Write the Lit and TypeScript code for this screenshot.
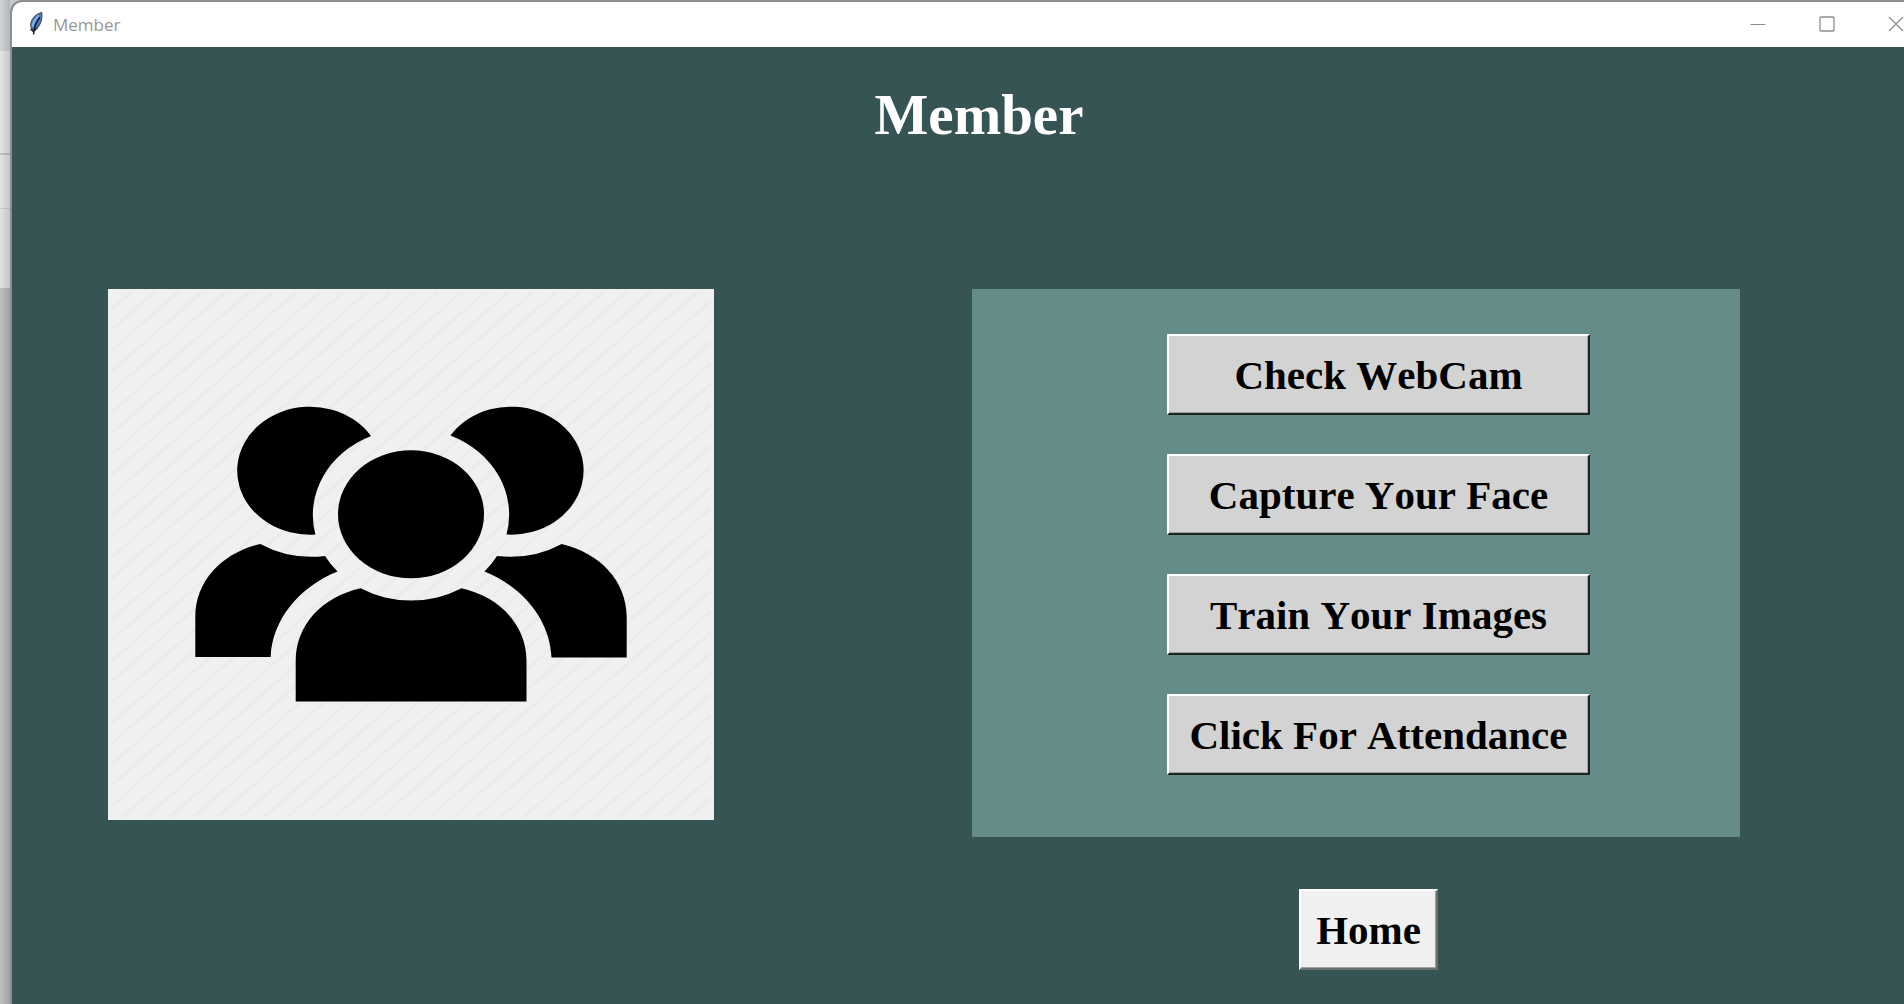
import { LitElement, html, css } from "lit";
import { customElement } from "lit/decorators.js";

const ACTIONS = ["Check WebCam", "Capture Your Face", "Train Your Images", "Click For Attendance"];

@customElement("title-bar")
class TitleBar extends LitElement {
  static styles = css`
    :host {
      display: block;
    }
    .bar {
      display: flex;
      align-items: center;
      height: 45px;
      padding: 0 16px 0 14px;
      background: #ffffff;
    }
    .feather {
      width: 20px;
      height: 26px;
      margin: 0 7px 2px 0;
    }
    .name {
      flex: 1;
      font: 400 17px/24px "Open Sans", "Noto Sans", sans-serif;
      color: #979797;
    }
    .control {
      display: flex;
      align-items: center;
      justify-content: center;
      width: 69px;
      height: 45px;
      padding: 0 0 2px;
      border: 0;
      background: none;
    }
    .control svg {
      width: 16px;
      height: 16px;
      fill: none;
      stroke: #8c8c8c;
      stroke-width: 1;
    }
  `;

  render() {
    return html`
      <header class="bar">
        <svg class="feather" viewBox="0 0 20 26" aria-hidden="true">
          <path d="M15.500 1.500C16.500 6 15 12.500 11 17.500L7 19C2.500 15 5 5 15.500 1.500Z" fill="#4a80c4" stroke="#4a525d" stroke-width="1.300" />
          <path d="M13 4.500C9 8 7 11.500 6.500 15.500" fill="none" stroke="#7fb0e6" stroke-width="2.200" />
          <path d="M14 6C10 11 8 17 7.500 23.500" fill="none" stroke="#10141a" stroke-width="1.400" />
          <path d="M4.500 18L7.500 20.500L10.500 17.500" fill="none" stroke="#1c2128" stroke-width="1.500" />
        </svg>
        <span class="name">Member</span>
        <button class="control" aria-label="Minimize">
          <svg viewBox="0 0 16 16"><path d="M0.500 8.500H15.500" /></svg>
        </button>
        <button class="control" aria-label="Maximize">
          <svg viewBox="0 0 16 16"><rect x="1" y="1" width="14" height="14" rx="1" stroke-width="1.300" /></svg>
        </button>
        <button class="control" aria-label="Close">
          <svg viewBox="0 0 16 16"><path d="M1 1L15 15M15 1L1 15" stroke-width="1.300" /></svg>
        </button>
      </header>
    `;
  }
}

@customElement("people-picture")
class PeoplePicture extends LitElement {
  static styles = css`
    :host {
      display: block;
    }
    .picture {
      display: block;
      width: 100%;
      height: auto;
      background: #f0f0f0;
    }
  `;

  render() {
    return html`
      <svg class="picture" viewBox="0 0 606 531" role="img" aria-label="Group of members">
        <defs>
          <pattern id="hatch" x="49" y="1" width="23.600" height="20.700" patternUnits="userSpaceOnUse">
            <path d="M-4 24.200L27.600 -3.500M-4 3.500L4 -3.500M19.600 24.200L27.600 17.200" stroke="#ebebeb" stroke-width="3" />
          </pattern>
        </defs>
        <rect x="3" y="3" width="600" height="525" fill="url(#hatch)" />
        <path d="M263 147A72.700 64 0 1 0 207.400 245.500A98.500 86.500 0 0 1 263 147Z" />
        <path d="M87.300 368V328C87.300 292 114 264 152.300 255A98 85.500 0 0 0 217 267A98.500 86.500 0 0 0 229.500 282.500C191 298 164 331 162.700 368Z" />
        <path d="M342.500 146.500A72.500 64 0 1 1 398.500 245.500A98.500 86.500 0 0 0 342.500 146.500Z" />
        <path d="M518.700 368.500V328C518.700 292 492 264 453.700 255A98 85.500 0 0 1 389 267A98.500 86.500 0 0 1 376.500 282.500C415 298 442 331 443.500 368.500Z" />
        <ellipse cx="303" cy="225.300" rx="73" ry="64" />
        <path d="M187.700 412.500V372C187.700 336 214 308 252.600 299.300A98.500 86.500 0 0 0 353.600 299.300C392 308 418.500 336 418.500 372V412.500Z" />
      </svg>
    `;
  }
}

@customElement("app-root")
class AppRoot extends LitElement {
  static styles = css`
    :host {
      display: block;
      min-height: 100vh;
      overflow: hidden;
      font-family: "Liberation Serif", "Times New Roman", serif;
    }
    .desktop {
      display: flex;
      min-height: 100vh;
      background: linear-gradient(#c9cccf 0 51px, #dedede 51px 153px, #b8b8b8 153px 155px, #dedede 155px 208px, #c6c6c6 208px 209px, #dcdcdc 209px 288px, #b4b4b4 288px);
    }
    .edge {
      flex: none;
      width: 10px;
      background: linear-gradient(90deg, rgba(255, 255, 255, 0.15), rgba(0, 0, 0, 0.1));
    }
    .window {
      flex: none;
      box-sizing: border-box;
      width: calc(100% + 34px);
      border: 2px solid #8a8f8e;
      border-bottom: 0;
      border-radius: 12px 0 0 0;
      overflow: hidden;
      background: #355453;
    }
    .title {
      margin: 0;
      padding: 35px 0 0;
      font-size: 57px;
      line-height: 66px;
      font-weight: 700;
      text-align: center;
      color: #ffffff;
    }
    .content {
      display: grid;
      grid-template-columns: 606fr 768fr;
      column-gap: 258px;
      align-items: start;
      padding: 141px 206px 34px 96px;
    }
    .actions {
      display: flex;
      flex-direction: column;
      gap: 39px;
      padding: 45px 150px 62px 195px;
      background: #668c89;
    }
    .action {
      height: 81px;
      padding: 0;
      border: 2px solid;
      border-color: #ffffff #1c2424 #1c2424 #ffffff;
      box-shadow: inset -1px -1px 0 #a0a0a0;
      background: #d3d3d3;
      font: 700 41px/46px "Liberation Serif", "Times New Roman", serif;
      font-kerning: none;
      color: #000000;
      white-space: nowrap;
    }
    .footer {
      display: flex;
      grid-column: 2;
      justify-content: center;
      padding: 52px 0 0 25px;
    }
    .home {
      padding: 0 15px;
      background: #f0f0f0;
      border-color: #ffffff #6c6f6f #6c6f6f #ffffff;
    }
  `;

  render() {
    return html`
      <div class="desktop">
        <div class="edge"></div>
        <div class="window">
          <title-bar></title-bar>
          <main>
            <h1 class="title">Member</h1>
            <div class="content">
              <people-picture></people-picture>
              <section class="actions">
                ${ACTIONS.map((label) => html`<button class="action">${label}</button>`)}
              </section>
              <div class="footer"><button class="action home">Home</button></div>
            </div>
          </main>
        </div>
      </div>
    `;
  }
}
